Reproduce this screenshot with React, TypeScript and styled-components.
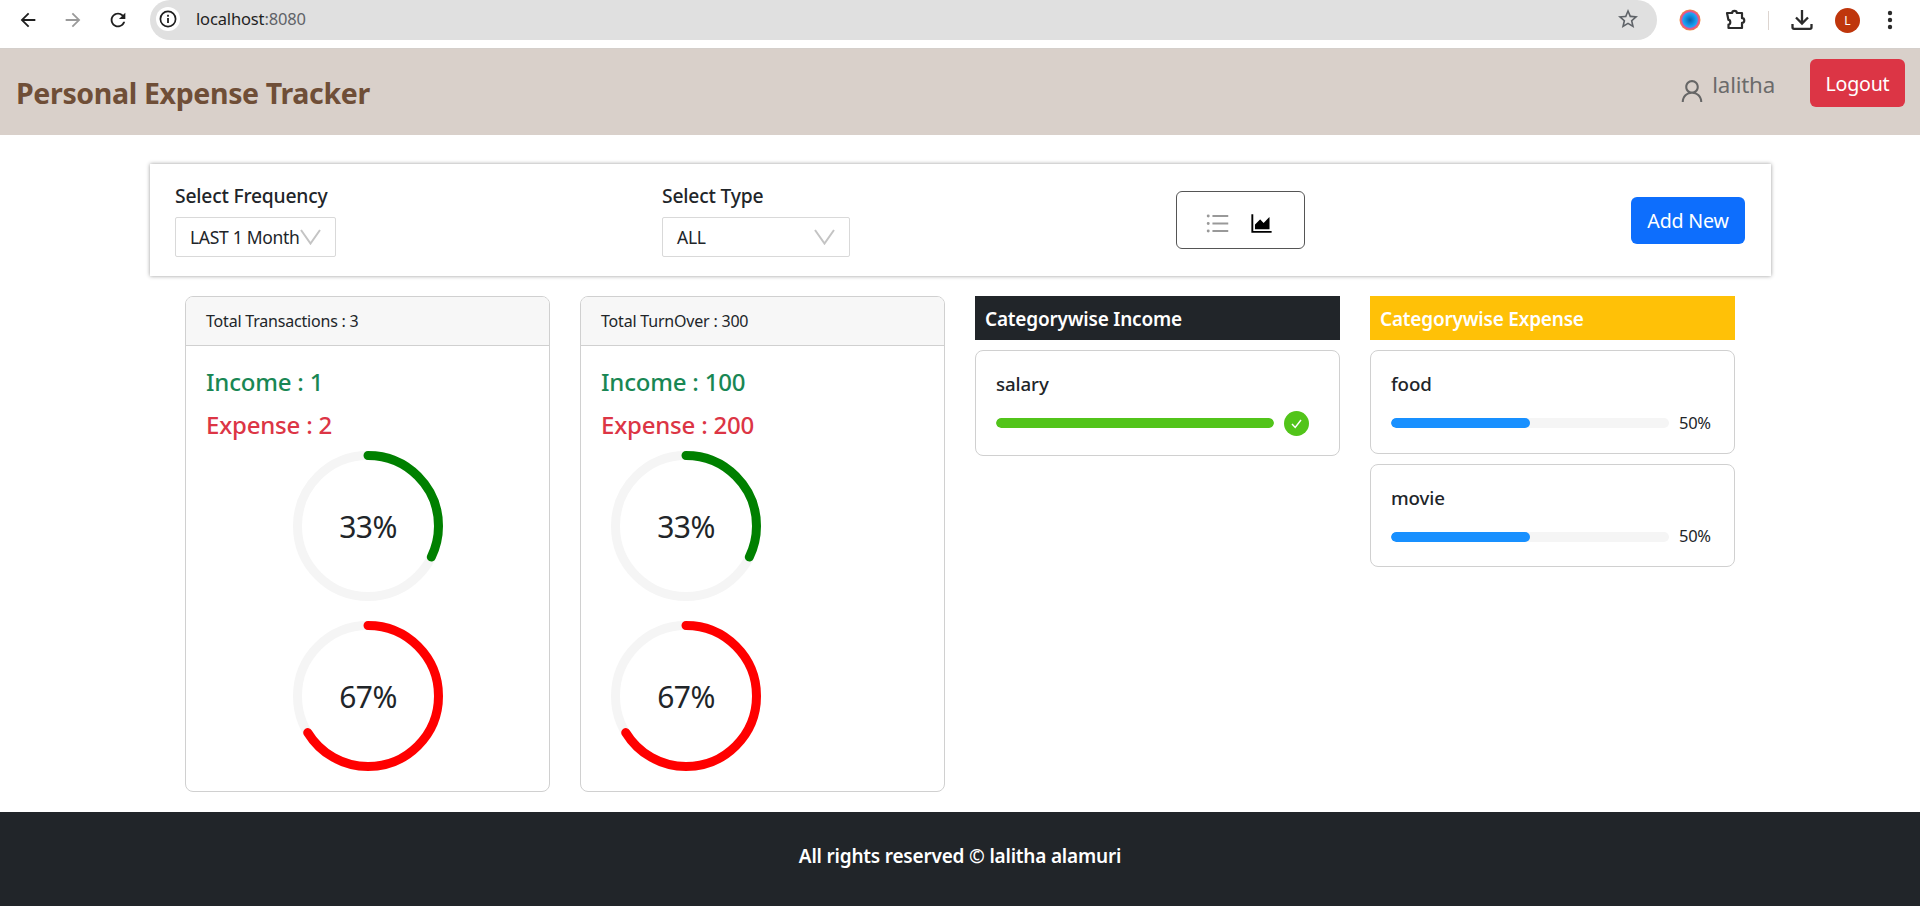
import React from "react";
import styled, { createGlobalStyle } from "styled-components";
import { AiOutlineAreaChart, AiOutlineUnorderedList, AiOutlineUser } from "react-icons/ai";

const font = `"Noto Sans", "Open Sans", sans-serif`;

const Global = createGlobalStyle`
  html, body { margin: 0; padding: 0; background: #fff; }
  body { font-family: ${font}; color: #212529; }
  * { box-sizing: border-box; }
`;

const ChromeBar = styled.div`
  height: 48px;
  display: flex;
  align-items: flex-start;
  background: #fff;
`;
const NavIcons = styled.div`
  width: 150px;
  height: 40px;
  display: flex;
  align-items: center;
  gap: 23px;
  padding-left: 17px;
  flex: none;
`;
const Omnibox = styled.div`
  flex: none;
  width: 1507px;
  height: 40px;
  border-radius: 20px;
  background: #e0e0e0;
  display: flex;
  align-items: center;
  padding: 0 17px 2px 6px;
`;
const InfoBadge = styled.span`
  width: 24px;
  height: 24px;
  border-radius: 50%;
  background: #fff;
  display: flex;
  align-items: center;
  justify-content: center;
  flex: none;
`;
const Url = styled.span`
  margin-left: 16px;
  font-size: 16.5px;
  letter-spacing: -0.15px;
  color: #1f1f1f;
  flex: 1;
  padding-bottom: 1px;
`;
const UrlDim = styled.span`
  color: #5f6368;
`;
const ToolIcons = styled.div`
  flex: 1;
  height: 40px;
  display: flex;
  align-items: center;
  padding-left: 22px;
`;
const Separator = styled.span`
  width: 1px;
  height: 19px;
  background: #ddd5d0;
  margin: 0 21px 0 21px;
  flex: none;
`;
const Avatar = styled.span`
  width: 25px;
  height: 25px;
  border-radius: 50%;
  background: #bf360c;
  color: #fff;
  font-size: 12px;
  display: flex;
  align-items: center;
  justify-content: center;
  margin: 0 27px 0 21px;
  flex: none;
`;

const Navbar = styled.header`
  height: 87px;
  background: #d9d0ca;
  border-top: 1px solid #d4cfcb;
  display: flex;
  justify-content: space-between;
  padding: 0 15px 0 16px;
`;
const Brand = styled.div`
  align-self: center;
  margin-top: 1px;
  font-size: 28.5px;
  font-weight: 700;
  letter-spacing: -0.35px;
  color: #6f4e37;
`;
const UserArea = styled.div`
  display: flex;
  align-items: flex-start;
  padding-top: 10px;
`;
const UserName = styled.div`
  display: flex;
  align-items: center;
  gap: 8px;
  margin: 6px 35px 0 0;
  font-size: 22.3px;
  letter-spacing: -0.2px;
  color: #6b6b6b;
  height: 38px;
`;
const UserGlyph = styled(AiOutlineUser)`
  font-size: 28px;
  margin: 13px -2px 0 -3px;
  color: #666;
`;
const Button = styled.button<{ $color: string }>`
  border: 0;
  border-radius: 6px;
  background: ${(p) => p.$color};
  color: #fff;
  font-family: ${font};
  font-size: 19.6px;
  letter-spacing: -0.2px;
  padding: 0;
`;
const LogoutButton = styled(Button)`
  width: 95px;
  height: 48px;
`;
const AddButton = styled(Button)`
  width: 114px;
  height: 47px;
`;

const Main = styled.main`
  padding: 29px 150px 0 150px;
`;
const FilterCard = styled.section`
  height: 112px;
  width: 1621px;
  display: flex;
  justify-content: space-between;
  align-items: flex-start;
  padding: 0 26px 0 25px;
  box-shadow: 0 0 4px #999;
`;
const Field = styled.div`
  display: flex;
  flex-direction: column;
  padding-top: 18px;
`;
const FieldLabel = styled.label`
  font-size: 19.3px;
  font-weight: 500;
  letter-spacing: -0.2px;
  line-height: 28px;
  height: 35px;
`;
const Select = styled.div<{ $width: number }>`
  width: ${(p) => p.$width}px;
  height: 40px;
  border: 1px solid #d9d9d9;
  border-radius: 2px;
  display: flex;
  align-items: center;
  justify-content: space-between;
  padding: 0 15px 0 14px;
  font-size: 17.5px;
  letter-spacing: -0.3px;
  background: #fff;
  white-space: nowrap;
`;
const ViewSwitch = styled.div`
  width: 129px;
  height: 58px;
  margin-top: 27px;
  border: 1px solid #555;
  border-radius: 6px;
  display: flex;
  align-items: center;
  justify-content: center;
  gap: 17px;
  padding: 6px 3px 0 0;
`;
const ListGlyph = styled(AiOutlineUnorderedList)`
  font-size: 27px;
  color: #999;
`;
const ChartGlyph = styled(AiOutlineAreaChart)`
  font-size: 27px;
  color: #000;
`;
const AddSlot = styled.div`
  margin-top: 33px;
`;

const Grid = styled.div`
  display: grid;
  grid-template-columns: repeat(4, 365px);
  gap: 30px;
  margin: 20px 0 20px 35px;
`;
const Card = styled.article`
  height: 496px;
  border: 1px solid #d0d0d0;
  border-radius: 8px;
  overflow: hidden;
`;
const CardHeader = styled.div`
  height: 49px;
  background: #f7f7f7;
  border-bottom: 1px solid #d0d0d0;
  padding: 0 20px;
  font-size: 16px;
  letter-spacing: -0.2px;
  line-height: 49px;
`;
const CardBody = styled.div`
  padding: 19px 20px 0 20px;
`;
const Stat = styled.div<{ $color: string }>`
  height: 34px;
  margin-bottom: 9px;
  line-height: 34px;
  font-size: 24px;
  font-weight: 500;
  letter-spacing: -0.2px;
  color: ${(p) => p.$color};
`;
const Donuts = styled.div<{ $offset?: number }>`
  display: flex;
  flex-direction: column;
  gap: 20px;
  width: 150px;
  margin-left: ${(p) => (p.$offset !== undefined ? `${p.$offset}px` : "87px")};
`;
const DonutWrap = styled.div`
  position: relative;
  width: 150px;
  height: 150px;
`;
const DonutLabel = styled.span`
  position: absolute;
  inset: 0;
  display: flex;
  align-items: center;
  justify-content: center;
  font-size: 30px;
  letter-spacing: -0.6px;
  padding-top: 1px;
`;

const CategoryHeading = styled.h3<{ $bg: string }>`
  margin: 0 0 10px;
  height: 44px;
  padding: 0 10px;
  background: ${(p) => p.$bg};
  color: #fff;
  font-size: 19px;
  font-weight: 600;
  letter-spacing: -0.2px;
  line-height: 46px;
`;
const CategoryItem = styled.div<{ $tall?: boolean }>`
  border: 1px solid #d0d0d0;
  border-radius: 8px;
  padding: 20px 20px 0;
  margin-bottom: 10px;
  height: ${(p) => (p.$tall ? "106px" : "103.5px")};
`;
const CategoryName = styled.div`
  font-size: 18.7px;
  font-weight: 500;
  letter-spacing: -0.1px;
  line-height: 26px;
  height: 39px;
`;
const ProgressRow = styled.div`
  display: flex;
  align-items: center;
  height: 26px;
  gap: 10px;
`;
const Track = styled.div`
  width: 278px;
  height: 10px;
  border-radius: 5px;
  background: #f5f5f5;
  overflow: hidden;
  flex: none;
`;
const Fill = styled.div<{ $color: string }>`
  height: 100%;
  border-radius: 5px;
  background: ${(p) => p.$color};
`;
const ProgressText = styled.span`
  font-size: 16.5px;
  letter-spacing: -0.3px;
  padding-bottom: 2px;
`;
const Tick = styled.span`
  width: 25px;
  height: 25px;
  border-radius: 50%;
  background: #52c41a;
  display: flex;
  align-items: center;
  justify-content: center;
  flex: none;
`;

const Footer = styled.footer`
  height: 94px;
  margin-bottom: 10px;
  padding-bottom: 6px;
  background: #212529;
  color: #fff;
  display: flex;
  align-items: center;
  justify-content: center;
  font-size: 19px;
  font-weight: 600;
  letter-spacing: -0.2px;
`;

const Ico = ({ d, fill = "#1f1f1f", size = 24 }: { d: string; fill?: string; size?: number }) => (
  <svg width={size} height={size} viewBox="0 0 24 24" fill={fill} style={{ flex: "none" }}>
    <path d={d} />
  </svg>
);

const Chevron = () => (
  <svg width="21" height="16" viewBox="0 0 21 16" fill="none" stroke="#c4c4c4" strokeWidth="2" style={{ flex: "none", marginRight: -1 }}>
    <path d="M1 1l9.5 13.5L20 1" />
  </svg>
);

const Donut = ({ pct, color }: { pct: number; color: string }) => {
  const r = 70.5;
  const c = 2 * Math.PI * r;
  return (
    <DonutWrap>
      <svg width="150" height="150" viewBox="0 0 150 150" fill="none">
        <circle cx="75" cy="75" r={r} stroke="#f5f5f5" strokeWidth="9" />
        <circle
          cx="75"
          cy="75"
          r={r}
          stroke={color}
          strokeWidth="9"
          strokeLinecap="round"
          strokeDasharray={`${(c * (pct - 0.8)) / 100} ${c}`}
          transform="rotate(-90 75 75)"
        />
      </svg>
      <DonutLabel>{pct}%</DonutLabel>
    </DonutWrap>
  );
};

const ExpenseItem = ({ name }: { name: string }) => (
  <CategoryItem>
    <CategoryName>{name}</CategoryName>
    <ProgressRow>
      <Track>
        <Fill $color="#1890ff" style={{ width: "50%" }} />
      </Track>
      <ProgressText>50%</ProgressText>
    </ProgressRow>
  </CategoryItem>
);

export default function App() {
  return (
    <>
      <Global />
      <ChromeBar>
        <NavIcons>
          <Ico size={22} d="M20 11H7.83l5.59-5.59L12 4l-8 8 8 8 1.41-1.41L7.83 13H20v-2z" />
          <Ico size={22} fill="#9a9a9a" d="M4 11h12.17l-5.59-5.59L12 4l8 8-8 8-1.41-1.41L16.17 13H4v-2z" />
          <Ico size={22} d="M17.65 6.35A7.958 7.958 0 0 0 12 4c-4.42 0-7.99 3.58-7.99 8s3.57 8 7.99 8c3.73 0 6.84-2.55 7.73-6h-2.08A5.99 5.99 0 0 1 12 18c-3.31 0-6-2.69-6-6s2.69-6 6-6c1.66 0 3.14.69 4.22 1.78L13 11h7V4l-2.35 2.35z" />
        </NavIcons>
        <Omnibox>
          <InfoBadge>
            <svg width="18" height="18" viewBox="0 0 18 18" fill="none">
              <circle cx="9" cy="9" r="7.6" stroke="#1f1f1f" strokeWidth="1.7" />
              <rect x="8.1" y="8" width="1.8" height="5" fill="#1f1f1f" />
              <rect x="8.1" y="4.8" width="1.8" height="1.9" fill="#1f1f1f" />
            </svg>
          </InfoBadge>
          <Url>
            localhost<UrlDim>:8080</UrlDim>
          </Url>
          <Ico fill="#5f6368" d="M22 9.24l-7.19-.62L12 2 9.19 8.63 2 9.24l5.46 4.73L5.82 21 12 17.27 18.18 21l-1.63-7.03L22 9.24zM12 15.4l-3.76 2.27 1-4.28-3.32-2.88 4.38-.38L12 6.1l1.71 4.04 4.38.38-3.32 2.88 1 4.28L12 15.4z" />
        </Omnibox>
        <ToolIcons>
          <svg width="22" height="24" viewBox="0 0 22 24" style={{ flex: "none", marginRight: 24 }}>
            <defs>
              <radialGradient id="orb" cx="50%" cy="50%" r="50%">
                <stop offset="0%" stopColor="#0b5fa8" />
                <stop offset="50%" stopColor="#1296e8" />
                <stop offset="70%" stopColor="#2aa4ee" />
                <stop offset="78%" stopColor="#e04aa0" />
                <stop offset="100%" stopColor="#f08a3c" />
              </radialGradient>
            </defs>
            <circle cx="11" cy="12" r="10.5" fill="url(#orb)" />
          </svg>
          <svg width="22" height="24" viewBox="0 0 22 24" fill="none" stroke="#2b2b2b" strokeWidth="2.2" strokeLinejoin="round" style={{ flex: "none" }}>
            <path d="M2 5h5.2c0-2.8 4.6-2.8 4.6 0H17v5.2c3 0 3 4.6 0 4.6V20H3.5v-3.4c2.4 0 2.4-4.8-.1-4.8L2 5z" />
          </svg>
          <Separator />
          <svg width="24" height="24" viewBox="0 0 24 24" fill="none" stroke="#2b2b2b" strokeWidth="2.3" style={{ flex: "none" }}>
            <path d="M12 2v13M6 9.5l6 6 6-6" />
            <path d="M2.5 16v3.2c0 1 .6 1.6 1.6 1.6h15.8c1 0 1.6-.6 1.6-1.6V16" />
          </svg>
          <Avatar>L</Avatar>
          <svg width="6" height="20" viewBox="0 0 6 20" fill="#2b2b2b" style={{ flex: "none" }}>
            <circle cx="3" cy="3" r="2.2" />
            <circle cx="3" cy="10" r="2.2" />
            <circle cx="3" cy="17" r="2.2" />
          </svg>
        </ToolIcons>
      </ChromeBar>

      <Navbar>
        <Brand>Personal Expense Tracker</Brand>
        <UserArea>
          <UserName>
            <UserGlyph />
            lalitha
          </UserName>
          <LogoutButton $color="#dc3545">Logout</LogoutButton>
        </UserArea>
      </Navbar>

      <Main>
        <FilterCard>
          <Field>
            <FieldLabel>Select Frequency</FieldLabel>
            <Select $width={161}>
              LAST 1 Month
              <Chevron />
            </Select>
          </Field>
          <Field>
            <FieldLabel>Select Type</FieldLabel>
            <Select $width={188}>
              ALL
              <Chevron />
            </Select>
          </Field>
          <ViewSwitch>
            <ListGlyph />
            <ChartGlyph />
          </ViewSwitch>
          <AddSlot>
            <AddButton $color="#0d6efd">Add New</AddButton>
          </AddSlot>
        </FilterCard>

        <Grid>
          <Card>
            <CardHeader>Total Transactions : 3</CardHeader>
            <CardBody>
              <Stat $color="#198754">Income : 1</Stat>
              <Stat $color="#dc3545">Expense : 2</Stat>
              <Donuts>
                <Donut pct={33} color="#008000" />
                <Donut pct={67} color="#ff0000" />
              </Donuts>
            </CardBody>
          </Card>
          <Card>
            <CardHeader>Total TurnOver : 300</CardHeader>
            <CardBody>
              <Stat $color="#198754">Income : 100</Stat>
              <Stat $color="#dc3545">Expense : 200</Stat>
              <Donuts $offset={10}>
                <Donut pct={33} color="#008000" />
                <Donut pct={67} color="#ff0000" />
              </Donuts>
            </CardBody>
          </Card>
          <div>
            <CategoryHeading $bg="#212529">Categorywise Income</CategoryHeading>
            <CategoryItem $tall>
              <CategoryName>salary</CategoryName>
              <ProgressRow>
                <Track>
                  <Fill $color="#52c41a" style={{ width: "100%" }} />
                </Track>
                <Tick>
                  <svg width="13" height="13" viewBox="0 0 13 13" fill="none" stroke="#fff" strokeWidth="1.5">
                    <path d="M2 7l3.2 3.4L11 3" />
                  </svg>
                </Tick>
              </ProgressRow>
            </CategoryItem>
          </div>
          <div>
            <CategoryHeading $bg="#ffc107">Categorywise Expense</CategoryHeading>
            <ExpenseItem name="food" />
            <ExpenseItem name="movie" />
          </div>
        </Grid>
      </Main>

      <Footer>All rights reserved © lalitha alamuri</Footer>
    </>
  );
}
